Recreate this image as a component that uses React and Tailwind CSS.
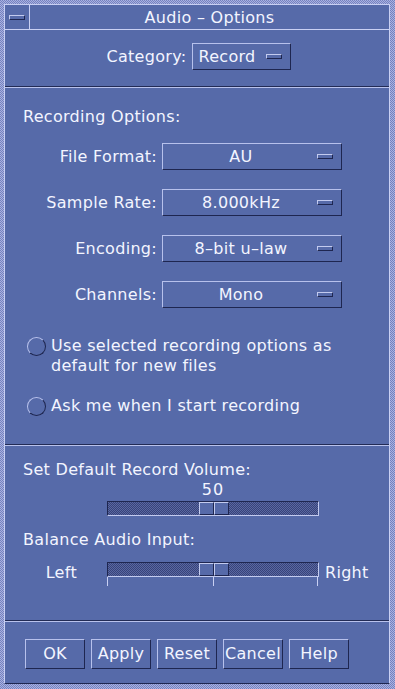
import React from 'react';

const font = { fontFamily: '"DejaVu Sans", "Liberation Sans", sans-serif' };

function Dash() {
  return <span className="block w-[16px] h-[5px] border border-t-[#c3cbef] border-l-[#c3cbef] border-b-[#1e2650] border-r-[#1e2650]" />;
}

function OptionMenu({ value, wide = false }) {
  if (!wide) {
    return (
      <div className="h-[27px] flex items-center pl-[5px] pr-[8px] border border-t-[#b7c1ec] border-l-[#b7c1ec] border-b-[#1e2650] border-r-[#1e2650]">
        <span>{value}</span>
        <span className="ml-[10px]"><Dash /></span>
      </div>
    );
  }
  return (
    <div className="w-[180px] h-[27px] flex items-center pr-[8px] border border-t-[#b7c1ec] border-l-[#b7c1ec] border-b-[#1e2650] border-r-[#1e2650]">
      <span className="flex-1 text-center pl-[2px]">{value}</span>
      <Dash />
    </div>
  );
}

function Separator() {
  return (
    <div className="h-[2px] flex flex-col">
      <div className="h-[1px] bg-[#222b55]" />
      <div className="h-[1px] bg-[#b9c2ec]" />
    </div>
  );
}

function Radio({ children }) {
  return (
    <div className="flex items-start">
      <span className="mt-[1px] ml-[22px] w-[19px] h-[19px] rounded-full border border-t-[#b9c2ec] border-l-[#b9c2ec] border-b-[#1e2650] border-r-[#1e2650] shrink-0" />
      <span className="ml-[5px] leading-[20px]">{children}</span>
    </div>
  );
}

function Slider() {
  return (
    <div className="relative w-[212px] h-[15px] border border-t-[#1e2650] border-l-[#1e2650] border-b-[#c3cbef] border-r-[#c3cbef] bg-[repeating-conic-gradient(#37437a_0%_25%,#5a67a0_0%_50%)] bg-[length:2px_2px]">
      <div className="absolute left-[91px] top-0 w-[30px] h-[13px] flex bg-[#566aa9]">
        <div className="w-[15px] h-full border border-t-[#c3cbef] border-l-[#c3cbef] border-b-[#1e2650] border-r-[#1e2650]" />
        <div className="w-[15px] h-full border border-t-[#c3cbef] border-l-[#c3cbef] border-b-[#1e2650] border-r-[#1e2650]" />
      </div>
    </div>
  );
}

function Button({ children }) {
  return (
    <div className="w-[60px] h-[30px] flex items-center justify-center border border-t-[#b7c1ec] border-l-[#b7c1ec] border-b-[#1e2650] border-r-[#1e2650]">
      {children}
    </div>
  );
}

const rows = [
  ['File Format:', 'AU'],
  ['Sample Rate:', '8.000kHz'],
  ['Encoding:', '8\u2013bit u\u2013law'],
  ['Channels:', 'Mono'],
];

export default function App() {
  return (
    <div
      className="w-[395px] h-[689px] pl-[4px] pt-[4px] pr-[5px] pb-[5px] bg-[repeating-conic-gradient(#aab2e0_0%_25%,#7482c0_0%_50%)] bg-[length:2px_2px] text-[16px] tracking-[0.3px] text-[#f3f5ff] leading-[20px]"
      style={font}
    >
      <div className="h-full flex flex-col bg-[#566aa9] border border-[#c9d0f3] border-b-[#1e2650] border-r-[#c9d0f3]">
        {/* title bar */}
        <div className="h-[25px] flex border-b border-[#c9d0f3]">
          <div className="w-[25px] flex items-center justify-center border-r border-[#c9d0f3]">
            <Dash />
          </div>
          <div className="flex-1 flex items-center justify-center pt-[1px]">Audio – Options</div>
        </div>

        {/* category */}
        <div className="h-[56px] pt-[13px] flex justify-center pl-[3px]">
          <div className="flex items-center h-[27px] gap-[6px]">
            <span>Category:</span>
            <OptionMenu value="Record" />
          </div>
        </div>
        <Separator />

        {/* recording options */}
        <div className="h-[356px] pt-[19px] pl-[18px] flex flex-col">
          <div>Recording Options:</div>
          <div className="mt-[16px] flex flex-col gap-[19px]">
            {rows.map(([label, value]) => (
              <div key={label} className="flex items-center">
                <span className="w-[134px] text-right">{label}</span>
                <span className="ml-[5px]"><OptionMenu value={value} wide /></span>
              </div>
            ))}
          </div>
          <div className="mt-[28px] -ml-[18px]">
            <Radio>
              Use selected recording options as
              <br />
              default for new files
            </Radio>
          </div>
          <div className="mt-[20px] -ml-[18px]">
            <Radio>Ask me when I start recording</Radio>
          </div>
        </div>
        <Separator />

        {/* volume */}
        <div className="h-[174px] pt-[14px] flex flex-col">
          <div className="pl-[18px]">Set Default Record Volume:</div>
          <div className="ml-[102px] w-[212px] text-center tracking-[1px]">50</div>
          <div className="ml-[102px] mt-[1px]">
            <Slider />
          </div>
          <div className="pl-[18px] mt-[14px]">Balance Audio Input:</div>
          <div className="mt-[12px] flex items-start">
            <span className="w-[72px] text-right mt-[1px]">Left</span>
            <div className="ml-[30px] flex flex-col">
              <Slider />
              <div className="relative h-[10px]">
                <span className="absolute left-0 top-0 w-[1px] h-[9px] bg-[#c9d0f3]" />
                <span className="absolute left-[106px] top-0 w-[1px] h-[9px] bg-[#c9d0f3]" />
                <span className="absolute right-[1px] top-0 w-[1px] h-[9px] bg-[#c9d0f3]" />
              </div>
            </div>
            <span className="ml-[6px] mt-[1px]">Right</span>
          </div>
        </div>
        <Separator />

        {/* buttons */}
        <div className="flex-1 pt-[17px] pl-[20px] flex gap-[6px]">
          <Button>OK</Button>
          <Button>Apply</Button>
          <Button>Reset</Button>
          <Button>Cancel</Button>
          <Button>Help</Button>
        </div>
      </div>
    </div>
  );
}
